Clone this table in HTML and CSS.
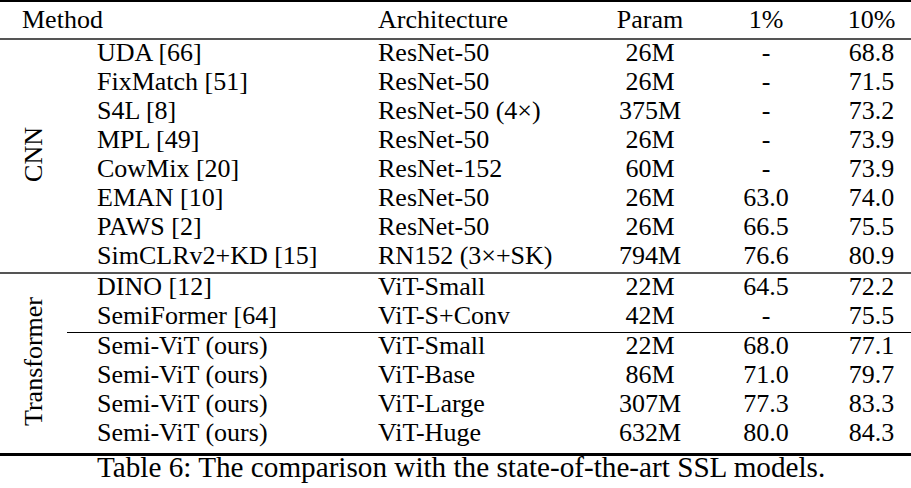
FILE: index.html
```html
<!DOCTYPE html>
<html>
<head>
<meta charset="utf-8">
<link rel="stylesheet" href="styles.css">
</head>
<body>
<table class="results">
  <colgroup>
    <col class="c-group">
    <col class="c-method">
    <col class="c-arch">
    <col class="c-param">
    <col class="c-one">
    <col class="c-ten">
  </colgroup>
  <thead>
    <tr>
      <th colspan="2" class="h-method">Method</th>
      <th class="h-arch">Architecture</th>
      <th class="num">Param</th>
      <th class="num">1%</th>
      <th class="num">10%</th>
    </tr>
  </thead>
  <tbody class="cnn">
    <tr>
      <td rowspan="8" class="group"><span class="vlabel">CNN</span></td>
      <td class="method">UDA [66]</td><td class="arch">ResNet-50</td><td class="num">26M</td><td class="num">-</td><td class="num">68.8</td>
    </tr>
    <tr><td class="method">FixMatch [51]</td><td class="arch">ResNet-50</td><td class="num">26M</td><td class="num">-</td><td class="num">71.5</td></tr>
    <tr><td class="method">S4L [8]</td><td class="arch">ResNet-50 (4×)</td><td class="num">375M</td><td class="num">-</td><td class="num">73.2</td></tr>
    <tr><td class="method">MPL [49]</td><td class="arch">ResNet-50</td><td class="num">26M</td><td class="num">-</td><td class="num">73.9</td></tr>
    <tr><td class="method">CowMix [20]</td><td class="arch">ResNet-152</td><td class="num">60M</td><td class="num">-</td><td class="num">73.9</td></tr>
    <tr><td class="method">EMAN [10]</td><td class="arch">ResNet-50</td><td class="num">26M</td><td class="num">63.0</td><td class="num">74.0</td></tr>
    <tr><td class="method">PAWS [2]</td><td class="arch">ResNet-50</td><td class="num">26M</td><td class="num">66.5</td><td class="num">75.5</td></tr>
    <tr><td class="method">SimCLRv2+KD [15]</td><td class="arch">RN152 (3×+SK)</td><td class="num">794M</td><td class="num">76.6</td><td class="num">80.9</td></tr>
  </tbody>
  <tbody class="transformer">
    <tr>
      <td rowspan="6" class="group"><span class="vlabel">Transformer</span></td>
      <td class="method">DINO [12]</td><td class="arch">ViT-Small</td><td class="num">22M</td><td class="num">64.5</td><td class="num">72.2</td>
    </tr>
    <tr><td class="method">SemiFormer [64]</td><td class="arch">ViT-S+Conv</td><td class="num">42M</td><td class="num">-</td><td class="num">75.5</td></tr>
    <tr class="ours-first"><td class="method">Semi-ViT (ours)</td><td class="arch">ViT-Small</td><td class="num">22M</td><td class="num">68.0</td><td class="num">77.1</td></tr>
    <tr><td class="method">Semi-ViT (ours)</td><td class="arch">ViT-Base</td><td class="num">86M</td><td class="num">71.0</td><td class="num">79.7</td></tr>
    <tr><td class="method">Semi-ViT (ours)</td><td class="arch">ViT-Large</td><td class="num">307M</td><td class="num">77.3</td><td class="num">83.3</td></tr>
    <tr class="last"><td class="method">Semi-ViT (ours)</td><td class="arch">ViT-Huge</td><td class="num">632M</td><td class="num">80.0</td><td class="num">84.3</td></tr>
  </tbody>
</table>
<p class="caption">Table 6: The comparison with the state-of-the-art SSL models.</p>
</body>
</html>
```

FILE: styles.css
```css
html, body {
  margin: 0;
  padding: 0;
  background: #fff;
}

body {
  font-family: "Liberation Serif", "Times New Roman", serif;
  font-size: 26px;
  color: #000;
  width: 911px;
  min-height: 488px;
}

.results {
  width: 911px;
  border-collapse: collapse;
  table-layout: fixed;
  border-top: 2px solid #000;
}

.c-group { width: 67px; }
.c-method { width: 293px; }
.c-arch { width: 240px; }
.c-param { width: 100px; }
.c-one { width: 132px; }
.c-ten { width: 79px; }

.results th,
.results td {
  padding: 0;
  font-weight: normal;
  white-space: nowrap;
  text-align: left;
}

.results thead th {
  height: 36px;
  line-height: 36px;
  vertical-align: middle;
  border-bottom: 2px solid #555;
}

.h-method { padding-left: 22px !important; }
.h-arch { padding-left: 18px !important; }

.results tbody td {
  height: 25px;
  line-height: 25px;
  padding-bottom: 4px;
  vertical-align: top;
}

.results .num { text-align: center; }

.method { padding-left: 30px !important; }
.arch { padding-left: 18px !important; }

.transformer {
  border-top: 2px solid #555;
  border-bottom: 3px solid #000;
}

.ours-first td {
  border-top: 1px solid #000;
}

.last td {
  padding-bottom: 8px !important;
}

.results td.group {
  vertical-align: middle;
  text-align: center;
  padding: 0;
}

.vlabel {
  display: inline-block;
  writing-mode: vertical-rl;
  transform: rotate(180deg);
  line-height: 26px;
}

.caption {
  margin: 0;
  padding-left: 97px;
  font-size: 29.2px;
  line-height: 22px;
}
```
